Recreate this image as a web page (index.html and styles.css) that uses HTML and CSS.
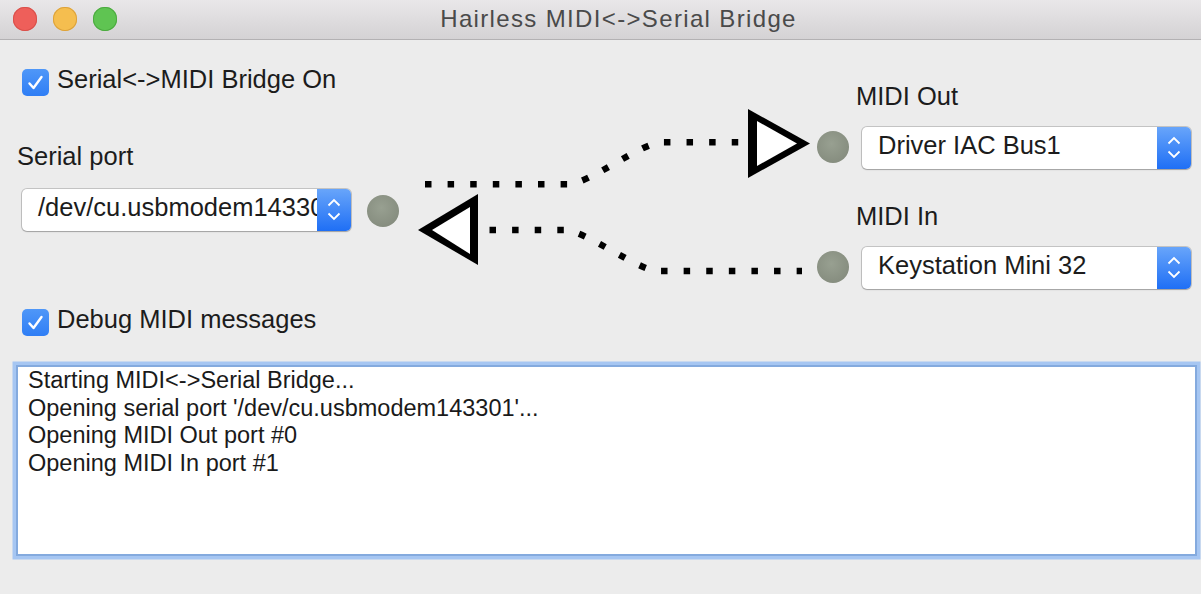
FILE: index.html
```html
<!DOCTYPE html>
<html>
<head>
<meta charset="utf-8">
<title>Hairless MIDI&lt;-&gt;Serial Bridge</title>
<link rel="stylesheet" href="styles.css">
</head>
<body>
<div class="window">
  <div class="titlebar">
    <div class="lights">
      <span class="light red"></span>
      <span class="light yellow"></span>
      <span class="light green"></span>
    </div>
    <div class="title">Hairless MIDI&lt;-&gt;Serial Bridge</div>
    <div class="spacer"></div>
  </div>

  <div class="content">
    <div class="bridge">
      <div class="left-col">
        <div class="check">
          <span class="box"><svg width="27" height="27" viewBox="0 0 27 27"><path d="M7.5 14.5 L11.5 19 L19.5 8" fill="none" stroke="#fff" stroke-width="2.4" stroke-linecap="round" stroke-linejoin="round"/></svg></span>
          <span class="check-text">Serial&lt;-&gt;MIDI Bridge On</span>
        </div>
        <div class="label serial-label">Serial port</div>
        <div class="select serial-select">
          <span class="value">/dev/cu.usbmodem143301</span>
          <span class="stepper"><svg width="34" height="41" viewBox="0 0 34 41"><path d="M11.5 16.5 L17 11 L22.5 16.5 M11.5 24.5 L17 30 L22.5 24.5" fill="none" stroke="#fff" stroke-width="1.8"/></svg></span>
        </div>
      </div>

      <svg class="diagram" width="502" height="249" viewBox="355 40 502 249">
        <defs>
          <radialGradient id="led" cx="45%" cy="40%" r="60%">
            <stop offset="0" stop-color="#98a091"/>
            <stop offset="1" stop-color="#868d7f"/>
          </radialGradient>
        </defs>
        <circle cx="383" cy="211" r="16" fill="url(#led)"/>
        <circle cx="833" cy="147" r="16" fill="url(#led)"/>
        <circle cx="833" cy="267" r="16" fill="url(#led)"/>
        <path d="M425 184.3 H568 C588.3 184.3 641.7 142.3 662 142.3 H740" fill="none" stroke="#000" stroke-width="6.5" stroke-dasharray="6.5 16.1"/>
        <path d="M489.5 230 H565 C584 230 639 271 658 271 H802" fill="none" stroke="#000" stroke-width="6.5" stroke-dasharray="6.5 16.1"/>
        <polygon points="748,109 748,178 810,143.5" fill="#000"/>
        <polygon points="757,121 757,166 797,143.5" fill="#fff"/>
        <polygon points="418,230 478,194 478,265" fill="#000"/>
        <polygon points="432,230 470,207 470,254" fill="#fff"/>
      </svg>

      <div class="right-col">
        <div class="label">MIDI Out</div>
        <div class="select">
          <span class="value">Driver IAC Bus1</span>
          <span class="stepper"><svg width="34" height="41" viewBox="0 0 34 41"><path d="M11.5 16.5 L17 11 L22.5 16.5 M11.5 24.5 L17 30 L22.5 24.5" fill="none" stroke="#fff" stroke-width="1.8"/></svg></span>
        </div>
        <div class="label in-label">MIDI In</div>
        <div class="select">
          <span class="value">Keystation Mini 32</span>
          <span class="stepper"><svg width="34" height="41" viewBox="0 0 34 41"><path d="M11.5 16.5 L17 11 L22.5 16.5 M11.5 24.5 L17 30 L22.5 24.5" fill="none" stroke="#fff" stroke-width="1.8"/></svg></span>
        </div>
      </div>
    </div>

    <div class="check debug">
      <span class="box"><svg width="27" height="27" viewBox="0 0 27 27"><path d="M7.5 14.5 L11.5 19 L19.5 8" fill="none" stroke="#fff" stroke-width="2.4" stroke-linecap="round" stroke-linejoin="round"/></svg></span>
      <span class="check-text">Debug MIDI messages</span>
    </div>

    <div class="log">
      <div>Starting MIDI&lt;-&gt;Serial Bridge...</div>
      <div>Opening serial port '/dev/cu.usbmodem143301'...</div>
      <div>Opening MIDI Out port #0</div>
      <div>Opening MIDI In port #1</div>
    </div>
  </div>
</div>
</body>
</html>
```
FILE: styles.css
```css
* { box-sizing: border-box; }
html, body {
  margin: 0;
  padding: 0;
  width: 1201px;
  height: 594px;
  overflow: hidden;
  background: #ececec;
  font-family: "Liberation Sans", Arial, sans-serif;
  color: #1c1c1c;
}
.window {
  width: 1201px;
  height: 594px;
  background: #ececec;
}
.titlebar {
  height: 40px;
  display: grid;
  grid-template-columns: 1fr auto 1fr;
  align-items: center;
  background: linear-gradient(#e9e7e9, #d4d2d4);
  border-bottom: 1px solid #b3b1b3;
}
.lights {
  display: flex;
  gap: 16.6px;
  padding-left: 13.3px;
  padding-bottom: 1px;
}
.light {
  width: 23.4px;
  height: 23.4px;
  border-radius: 50%;
  display: block;
}
.red { background: #ee5f5a; box-shadow: inset 0 0 0 1px #d9504b; }
.yellow { background: #f5be4f; box-shadow: inset 0 0 0 1px #dca23c; }
.green { background: #5fc452; box-shadow: inset 0 0 0 1px #4caa40; }
.title {
  font-size: 24px;
  letter-spacing: 1.35px;
  color: #4a4a4a;
  padding-left: 36px;
  padding-bottom: 2px;
  white-space: nowrap;
}
.content {
  padding: 0;
}
.bridge {
  display: flex;
  align-items: flex-start;
}
.left-col {
  width: 337px;
  margin-left: 18px;
  padding-top: 25px;
}
.check {
  display: flex;
  align-items: flex-start;
  font-size: 25.5px;
  line-height: 29px;
  height: 29px;
}
.box {
  width: 27px;
  height: 27px;
  margin-top: 3.5px;
  margin-left: 4px;
  margin-right: 8px;
  border-radius: 5px;
  background: linear-gradient(#4f97f8, #2f7ef5);
  display: block;
}
.box svg { display: block; }
.label {
  font-size: 25.5px;
  line-height: 29px;
  white-space: nowrap;
}
.serial-label {
  margin-top: 48px;
  margin-left: -1px;
}
.select {
  display: flex;
  width: 329px;
  height: 41.5px;
  background: #fff;
  border-radius: 5px;
  box-shadow: 0 0 0 1px rgba(0,0,0,0.17), 0 1px 1.5px rgba(0,0,0,0.18);
  font-size: 25.5px;
}
.serial-select {
  margin-top: 18px;
  margin-left: 4px;
}
.value {
  flex: 1;
  min-width: 0;
  overflow: hidden;
  white-space: nowrap;
  padding-left: 16px;
  line-height: 37px;
  padding-bottom: 4px;
}
.stepper {
  width: 34px;
  flex: none;
  background: linear-gradient(#68a5fa, #1f6ff5);
  border-radius: 0 5px 5px 0;
  display: block;
}
.stepper svg { display: block; }
.diagram {
  flex: none;
  display: block;
}
.right-col {
  padding-top: 41.6px;
  margin-left: -1px;
}
.right-col .select {
  margin-top: 16.7px;
  margin-left: 6px;
}
.in-label {
  margin-top: 32.8px;
}
.debug {
  margin-top: 16.2px;
  margin-left: 18px;
}
.debug .box {
  margin-top: 4.3px;
}
.log {
  margin-top: 31px;
  margin-left: 16px;
  width: 1181px;
  height: 191px;
  background: #fff;
  border: 2px solid #84aade;
  box-shadow: 0 0 0 3.5px #a6c6f2;
  font-size: 23.5px;
  line-height: 27.6px;
  padding-left: 10px;
  padding-top: 0;
  white-space: nowrap;
  color: #1a1a1a;
}
```
